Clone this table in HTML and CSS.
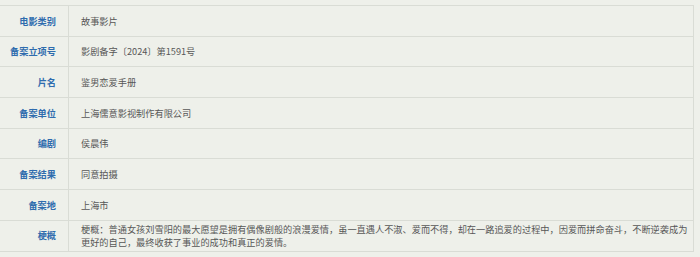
FILE: index.html
```html
<!DOCTYPE html>
<html lang="zh-CN">
<head>
<meta charset="utf-8">
<link rel="stylesheet" href="styles.css">
</head>
<body>
<div class="page">
<table class="info">
<tbody>
<tr><th>电影类别</th><td>故事影片</td></tr>
<tr><th>备案立项号</th><td>影剧备字〔2024〕第1591号</td></tr>
<tr><th>片名</th><td>鉴男恋爱手册</td></tr>
<tr><th>备案单位</th><td>上海儒意影视制作有限公司</td></tr>
<tr><th>编剧</th><td>侯晨伟</td></tr>
<tr><th>备案结果</th><td>同意拍摄</td></tr>
<tr><th>备案地</th><td>上海市</td></tr>
<tr><th>梗概</th><td class="summary">梗概：普通女孩刘雪阳的最大愿望是拥有偶像剧般的浪漫爱情，虽一直遇人不淑、爱而不得，却在一路追爱的过程中，因爱而拼命奋斗，不断逆袭成为更好的自己，最终收获了事业的成功和真正的爱情。</td></tr>
</tbody>
</table>
</div>
</body>
</html>
```

FILE: styles.css
```css
html, body {
  margin: 0;
  padding: 0;
  background: #eef0ea;
}
.page {
  width: 700px;
  height: 257px;
  overflow: hidden;
  padding-top: 5px;
  box-sizing: border-box;
}
.info {
  border-collapse: collapse;
  margin-left: -1px;
  width: 695px;
  table-layout: fixed;
  font-family: "Noto Sans CJK SC", "Noto Sans", sans-serif;
  font-size: 9.2px;
  line-height: 12.6px;
}
.info th, .info td {
  border: 1px solid #d9dcd5;
  height: 30.7px;
  padding: 0;
  vertical-align: middle;
  box-sizing: border-box;
}
.info th {
  width: 69px;
  text-align: right;
  padding-right: 12px;
  color: #2f6cae;
  font-weight: bold;
}
.info td {
  text-align: left;
  padding-left: 12px;
  padding-right: 2px;
  color: #575757;
}
```
